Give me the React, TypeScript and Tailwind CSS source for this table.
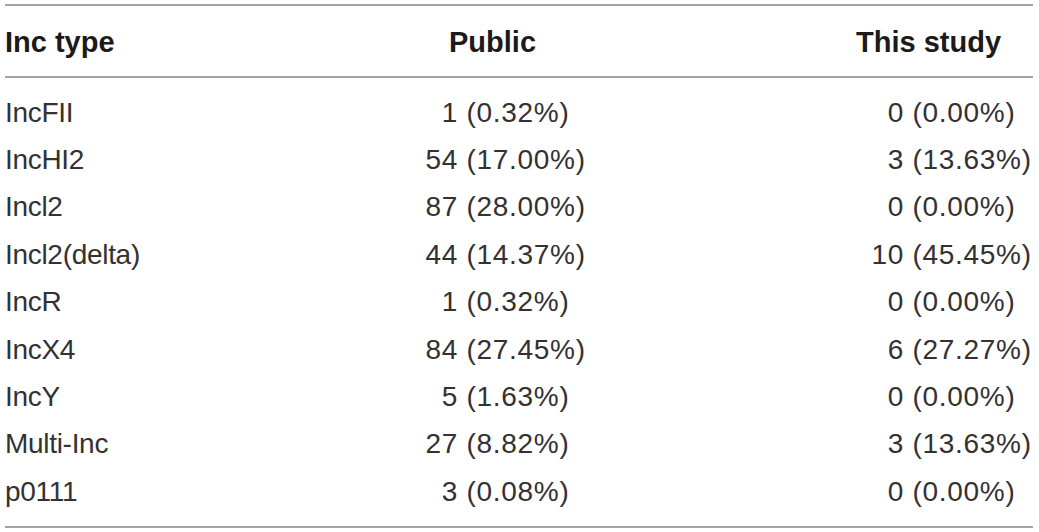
const rows: [string, string, string, string, string][] = [
  ['IncFII', '1', '(0.32%)', '0', '(0.00%)'],
  ['IncHI2', '54', '(17.00%)', '3', '(13.63%)'],
  ['Incl2', '87', '(28.00%)', '0', '(0.00%)'],
  ['Incl2(delta)', '44', '(14.37%)', '10', '(45.45%)'],
  ['IncR', '1', '(0.32%)', '0', '(0.00%)'],
  ['IncX4', '84', '(27.45%)', '6', '(27.27%)'],
  ['IncY', '5', '(1.63%)', '0', '(0.00%)'],
  ['Multi-Inc', '27', '(8.82%)', '3', '(13.63%)'],
  ['p0111', '3', '(0.08%)', '0', '(0.00%)'],
];

function Rule() {
  return <div className="h-[2px] bg-[#a3a3a3]" />;
}

export default function App() {
  return (
    <div className="w-[1039px] h-[532px] bg-white pt-[4px] pl-[5px] pr-[6px] font-['Liberation_Sans',Arial,sans-serif] overflow-hidden">
      <Rule />

      {/* header */}
      <div className="flex h-[70px] pt-[18px] text-[29px] leading-[36px] font-bold text-[#1c1a1b]">
        <div className="w-[444px]">Inc type</div>
        <div className="w-[407px]">Public</div>
        <div>This study</div>
      </div>

      <Rule />

      {/* body */}
      <div className="pt-[10.6px] pb-[10.8px] text-[28px] leading-[47.4px] text-[#333132]">
        {rows.map(([label, n1, p1, n2, p2]) => (
          <div key={label} className="flex whitespace-pre">
            <div className="w-[395px] tracking-[-0.3px]">{label}</div>
            <div className="w-[58px] text-right tracking-[0.7px]">{n1}</div>
            <div className="w-[372px] tracking-[0.7px]">{' ' + p1}</div>
            <div className="w-[74px] text-right tracking-[0.7px]">{n2}</div>
            <div className="flex-1 tracking-[0.7px]">{' ' + p2}</div>
          </div>
        ))}
      </div>

      <Rule />
    </div>
  );
}
